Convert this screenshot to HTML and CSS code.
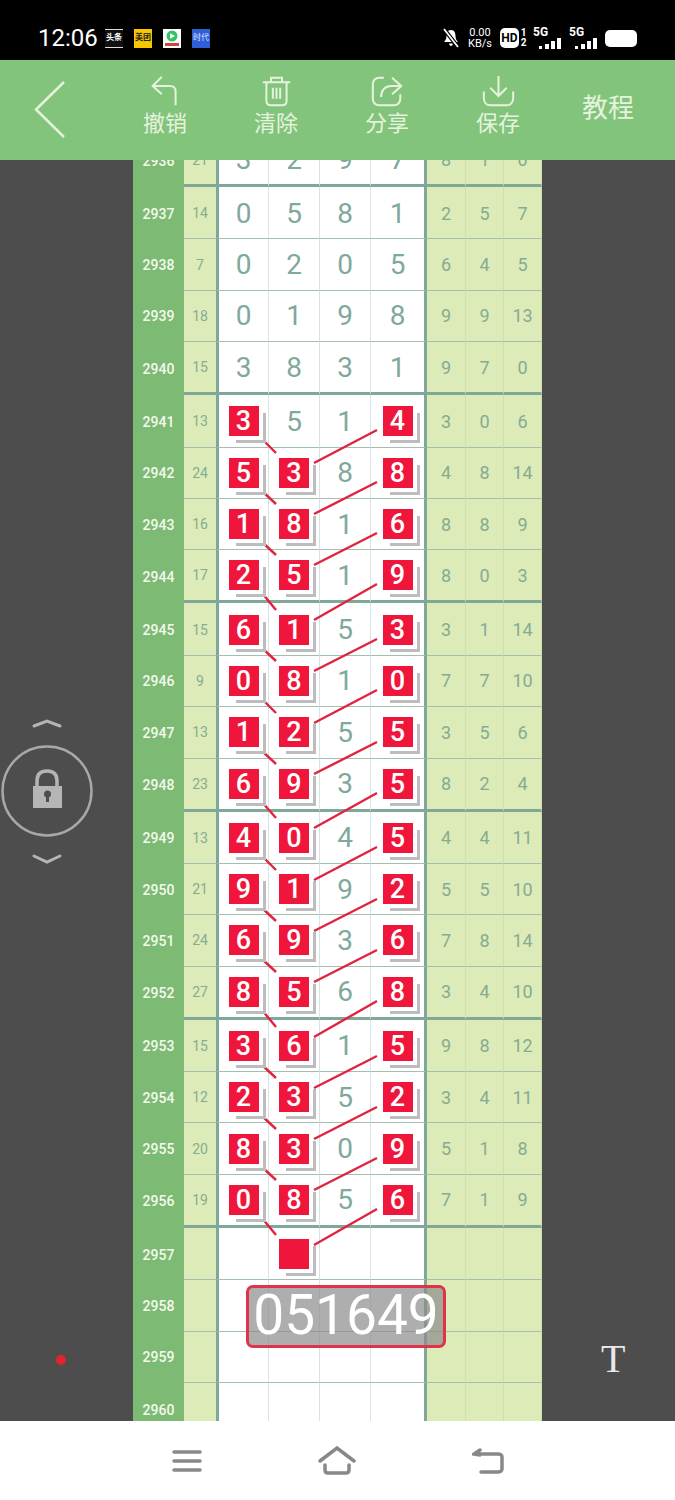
FILE: index.html
```html
<!DOCTYPE html>
<html lang="en">
<head>
  <meta charset="UTF-8">
  <title>Chart</title>
  <meta name="viewport" content="width=device-width, initial-scale=1.0">
  <link rel="stylesheet" href="styles.css">
</head>
<body>
  <div class="phone">
    <!-- Status bar -->
    <div class="statusbar">
      <span class="time">12:06</span>
      <span class="app app-toutiao">头条</span>
      <span class="app app-meituan">美团</span>
      <span class="app app-video">
        <svg viewBox="0 0 18 19" width="18" height="19"><rect width="18" height="19" fill="#fff"/><circle cx="9" cy="7" r="5.500" fill="#35c46a"/><path d="M7 4.300L12 7L7 9.700Z" fill="#fff"/><rect x="2" y="14" width="14" height="3" fill="#d8403a"/></svg>
      </span>
      <span class="app app-blue">时代</span>
      <span class="status-right">
        <svg class="bell" viewBox="0 0 18 20" width="18" height="20"><path d="M9 2C5.500 2 4.500 5 4.500 8C4.500 11 3.500 12.500 2 14H16C14.500 12.500 13.500 11 13.500 8C13.500 5 12.500 2 9 2ZM7 15.500C7.300 17 8 18 9 18C10 18 10.700 17 11 15.500Z" fill="#fff"/><path d="M2 1L16 19" stroke="#000" stroke-width="4"/><path d="M2 1L16 19" stroke="#fff" stroke-width="1.800"/></svg>
        <span class="speed"><span>0.00</span><span>KB/s</span></span>
        <span class="hd">HD</span>
        <span class="sim"><span>1</span><span>2</span></span>
        <span class="net">
          <span class="net-label">5G</span>
          <svg viewBox="0 0 24 12" width="24" height="12"><path d="M1 12V9H4V12ZM7 12V7H11V12ZM13 12V4H17V12ZM19 12V1H23V12Z" fill="#fff"/></svg>
        </span>
        <span class="net">
          <span class="net-label">5G</span>
          <svg viewBox="0 0 24 12" width="24" height="12"><path d="M1 12V9H4V12ZM7 12V7H11V12ZM13 12V4H17V12ZM19 12V1H23V12Z" fill="#fff"/></svg>
        </span>
        <span class="battery"></span>
      </span>
    </div>

    <!-- Toolbar -->
    <div class="toolbar">
      <svg class="back" viewBox="0 0 32 58" width="32" height="58"><path d="M30 1L2 28.500L30 56" fill="none" stroke="#e6f3dc" stroke-width="2.500"/></svg>
      <div class="tool tool-undo">
        <svg viewBox="0 0 36 36" width="36" height="36"><path d="M14 2L4 12L14 21M4 12H23C27 12 29 14.500 29 18V33" fill="none" stroke="#e6f3dc" stroke-width="2.200"/></svg>
        <span>撤销</span>
      </div>
      <div class="tool tool-clear">
        <svg viewBox="0 0 36 36" width="36" height="36"><path d="M3 8H33M12 8V3H24V8M7 8V28C7 31 9 33 12 33H24C27 33 29 31 29 28V8M14 14V26M18 14V26M22 14V26" fill="none" stroke="#e6f3dc" stroke-width="2.200"/></svg>
        <span>清除</span>
      </div>
      <div class="tool tool-share">
        <svg viewBox="0 0 36 36" width="36" height="36"><path d="M14 3H9C5 3 2 6 2 10V26C2 30 5 33 9 33H25C29 33 32 30 32 26V21M23 3L33 12L23 21M33 12H22C15 12 11 17 11 24" fill="none" stroke="#e6f3dc" stroke-width="2.200"/></svg>
        <span>分享</span>
      </div>
      <div class="tool tool-save">
        <svg viewBox="0 0 36 36" width="36" height="36"><path d="M18 1V23M9 14L18 23L27 14M2 18V25C2 30 5 33 9 33H27C31 33 34 30 34 25V18" fill="none" stroke="#e6f3dc" stroke-width="2.200"/></svg>
        <span>保存</span>
      </div>
      <span class="tutorial">教程</span>
    </div>

    <!-- Chart area -->
    <div class="main">
      <div class="board">
        <div class="sheet">
          <div class="group">
            <div class="row"><span class="no">2936</span><span class="sum">21</span><span class="d d1">3</span><span class="d">2</span><span class="d">9</span><span class="d d4">7</span><span class="r">8</span><span class="r">1</span><span class="r">0</span></div>
          </div>
          <div class="group">
            <div class="row"><span class="no">2937</span><span class="sum">14</span><span class="d d1">0</span><span class="d">5</span><span class="d">8</span><span class="d d4">1</span><span class="r">2</span><span class="r">5</span><span class="r">7</span></div>
            <div class="row"><span class="no">2938</span><span class="sum">7</span><span class="d d1">0</span><span class="d">2</span><span class="d">0</span><span class="d d4">5</span><span class="r">6</span><span class="r">4</span><span class="r">5</span></div>
            <div class="row"><span class="no">2939</span><span class="sum">18</span><span class="d d1">0</span><span class="d">1</span><span class="d">9</span><span class="d d4">8</span><span class="r">9</span><span class="r">9</span><span class="r">13</span></div>
            <div class="row"><span class="no">2940</span><span class="sum">15</span><span class="d d1">3</span><span class="d">8</span><span class="d">3</span><span class="d d4">1</span><span class="r">9</span><span class="r">7</span><span class="r">0</span></div>
          </div>
          <div class="group">
            <div class="row"><span class="no">2941</span><span class="sum">13</span><span class="d d1"><b class="hit">3</b></span><span class="d">5</span><span class="d">1</span><span class="d d4"><b class="hit">4</b></span><span class="r">3</span><span class="r">0</span><span class="r">6</span></div>
            <div class="row"><span class="no">2942</span><span class="sum">24</span><span class="d d1"><b class="hit">5</b></span><span class="d"><b class="hit">3</b></span><span class="d">8</span><span class="d d4"><b class="hit">8</b></span><span class="r">4</span><span class="r">8</span><span class="r">14</span></div>
            <div class="row"><span class="no">2943</span><span class="sum">16</span><span class="d d1"><b class="hit">1</b></span><span class="d"><b class="hit">8</b></span><span class="d">1</span><span class="d d4"><b class="hit">6</b></span><span class="r">8</span><span class="r">8</span><span class="r">9</span></div>
            <div class="row"><span class="no">2944</span><span class="sum">17</span><span class="d d1"><b class="hit">2</b></span><span class="d"><b class="hit">5</b></span><span class="d">1</span><span class="d d4"><b class="hit">9</b></span><span class="r">8</span><span class="r">0</span><span class="r">3</span></div>
          </div>
          <div class="group">
            <div class="row"><span class="no">2945</span><span class="sum">15</span><span class="d d1"><b class="hit">6</b></span><span class="d"><b class="hit">1</b></span><span class="d">5</span><span class="d d4"><b class="hit">3</b></span><span class="r">3</span><span class="r">1</span><span class="r">14</span></div>
            <div class="row"><span class="no">2946</span><span class="sum">9</span><span class="d d1"><b class="hit">0</b></span><span class="d"><b class="hit">8</b></span><span class="d">1</span><span class="d d4"><b class="hit">0</b></span><span class="r">7</span><span class="r">7</span><span class="r">10</span></div>
            <div class="row"><span class="no">2947</span><span class="sum">13</span><span class="d d1"><b class="hit">1</b></span><span class="d"><b class="hit">2</b></span><span class="d">5</span><span class="d d4"><b class="hit">5</b></span><span class="r">3</span><span class="r">5</span><span class="r">6</span></div>
            <div class="row"><span class="no">2948</span><span class="sum">23</span><span class="d d1"><b class="hit">6</b></span><span class="d"><b class="hit">9</b></span><span class="d">3</span><span class="d d4"><b class="hit">5</b></span><span class="r">8</span><span class="r">2</span><span class="r">4</span></div>
          </div>
          <div class="group">
            <div class="row"><span class="no">2949</span><span class="sum">13</span><span class="d d1"><b class="hit">4</b></span><span class="d"><b class="hit">0</b></span><span class="d">4</span><span class="d d4"><b class="hit">5</b></span><span class="r">4</span><span class="r">4</span><span class="r">11</span></div>
            <div class="row"><span class="no">2950</span><span class="sum">21</span><span class="d d1"><b class="hit">9</b></span><span class="d"><b class="hit">1</b></span><span class="d">9</span><span class="d d4"><b class="hit">2</b></span><span class="r">5</span><span class="r">5</span><span class="r">10</span></div>
            <div class="row"><span class="no">2951</span><span class="sum">24</span><span class="d d1"><b class="hit">6</b></span><span class="d"><b class="hit">9</b></span><span class="d">3</span><span class="d d4"><b class="hit">6</b></span><span class="r">7</span><span class="r">8</span><span class="r">14</span></div>
            <div class="row"><span class="no">2952</span><span class="sum">27</span><span class="d d1"><b class="hit">8</b></span><span class="d"><b class="hit">5</b></span><span class="d">6</span><span class="d d4"><b class="hit">8</b></span><span class="r">3</span><span class="r">4</span><span class="r">10</span></div>
          </div>
          <div class="group">
            <div class="row"><span class="no">2953</span><span class="sum">15</span><span class="d d1"><b class="hit">3</b></span><span class="d"><b class="hit">6</b></span><span class="d">1</span><span class="d d4"><b class="hit">5</b></span><span class="r">9</span><span class="r">8</span><span class="r">12</span></div>
            <div class="row"><span class="no">2954</span><span class="sum">12</span><span class="d d1"><b class="hit">2</b></span><span class="d"><b class="hit">3</b></span><span class="d">5</span><span class="d d4"><b class="hit">2</b></span><span class="r">3</span><span class="r">4</span><span class="r">11</span></div>
            <div class="row"><span class="no">2955</span><span class="sum">20</span><span class="d d1"><b class="hit">8</b></span><span class="d"><b class="hit">3</b></span><span class="d">0</span><span class="d d4"><b class="hit">9</b></span><span class="r">5</span><span class="r">1</span><span class="r">8</span></div>
            <div class="row"><span class="no">2956</span><span class="sum">19</span><span class="d d1"><b class="hit">0</b></span><span class="d"><b class="hit">8</b></span><span class="d">5</span><span class="d d4"><b class="hit">6</b></span><span class="r">7</span><span class="r">1</span><span class="r">9</span></div>
          </div>
          <div class="group group-open">
            <div class="row"><span class="no">2957</span><span class="sum"></span><span class="d d1"></span><span class="d"><b class="hit"></b></span><span class="d"></span><span class="d d4"></span><span class="r"></span><span class="r"></span><span class="r"></span></div>
            <div class="row"><span class="no">2958</span><span class="sum"></span><span class="d d1"></span><span class="d"></span><span class="d"></span><span class="d d4"></span><span class="r"></span><span class="r"></span><span class="r"></span></div>
            <div class="row"><span class="no">2959</span><span class="sum"></span><span class="d d1"></span><span class="d"></span><span class="d"></span><span class="d d4"></span><span class="r"></span><span class="r"></span><span class="r"></span></div>
            <div class="row"><span class="no">2960</span><span class="sum"></span><span class="d d1"></span><span class="d"></span><span class="d"></span><span class="d d4"></span><span class="r"></span><span class="r"></span><span class="r"></span></div>
          </div>
        </div>

        <!-- Links between the marked cells, in page coordinates -->
        <svg class="links" viewBox="133 160 409 1261" width="409" height="1261">
          <path d="M262 439L276 453M377 430L314 463M262 491L276 504M377 482L314 514M262 542L276 555M377 533L314 565M262 593L276 610M377 584L314 620M262 648L276 661M377 639L314 671M262 699L276 713M377 690L314 723M262 751L276 764M377 742L314 774M262 802L276 818M377 793L314 828M262 856L276 870M377 847L314 880M262 908L276 921M377 899L314 931M262 959L276 972M377 950L314 982M262 1010L276 1027M377 1001L314 1037M262 1065L276 1078M377 1056L314 1088M262 1116L276 1129M377 1107L314 1139M262 1167L276 1180M377 1158L314 1190M262 1218L276 1235M377 1209L314 1245" fill="none" stroke="#e0233f" stroke-width="2.400"/>
        </svg>

        <div class="result">051649</div>
      </div>

      <!-- Lock control -->
      <svg class="lock" viewBox="0 0 94 150" width="94" height="150">
        <path d="M34 7L47 2L60 7" fill="none" stroke="#b5b5b5" stroke-width="3" stroke-linecap="round"/>
        <circle cx="47" cy="72" r="44.500" fill="none" stroke="#a8a8a8" stroke-width="2.500"/>
        <path d="M37 68V62C37 55 41 52 47 52C53 52 57 55 57 62V68" fill="none" stroke="#b5b5b5" stroke-width="3.500"/>
        <rect x="33" y="67" width="29" height="22" fill="#b5b5b5"/>
        <circle cx="47.500" cy="75" r="3.500" fill="#4d4d4d"/>
        <rect x="46" y="76" width="3" height="7" fill="#4d4d4d"/>
        <path d="M34 137L47 143L60 137" fill="none" stroke="#b5b5b5" stroke-width="3" stroke-linecap="round"/>
      </svg>
      <span class="dot"></span>
      <span class="text-tool">T</span>
    </div>

    <!-- Navigation bar -->
    <div class="navbar">
      <svg viewBox="0 0 30 24" width="30" height="24"><path d="M2 3H28M2 12H28M2 21H28" fill="none" stroke="#888" stroke-width="3.500" stroke-linecap="round"/></svg>
      <svg viewBox="0 0 38 30" width="38" height="30"><path d="M2 15L19 2L36 15M7 19V24C7 26 8 27 10 27H28C30 27 31 26 31 24V19" fill="none" stroke="#888" stroke-width="3.500" stroke-linecap="round"/></svg>
      <svg viewBox="0 0 32 28" width="32" height="28"><path d="M3 7H26C28 7 30 8 30 10V22C30 24 28 25 26 25H9M8 3L2 7L8 8" fill="none" stroke="#888" stroke-width="3.500" stroke-linecap="round"/></svg>
    </div>
  </div>
</body>
</html>
```

FILE: styles.css
```css
html, body {
  margin: 0;
  padding: 0;
  background: #4d4d4d;
}
.phone {
  display: flex;
  flex-direction: column;
  width: 675px;
  height: 1500px;
  overflow: hidden;
  font-family: Roboto, "Noto Sans CJK SC", sans-serif;
}

/* Status bar */
.statusbar {
  display: flex;
  align-items: center;
  height: 60px;
  padding: 16px 38px 0;
  box-sizing: border-box;
  background: #000;
  color: #fff;
  flex: none;
}
.time {
  flex: none;
  width: 67px;
  font-size: 24px;
  white-space: nowrap;
}
.app {
  display: flex;
  align-items: center;
  justify-content: center;
  flex: none;
  width: 18px;
  height: 19px;
  margin-right: 11px;
  font-size: 8px;
  line-height: 8px;
  overflow: hidden;
}
.app-toutiao {
  background: #111;
  border-top: 1px solid #ddd;
  border-bottom: 1px solid #ddd;
  box-sizing: border-box;
  font-weight: bold;
}
.app-meituan {
  background: #f7c600;
  color: #222;
  font-weight: bold;
}
.app-blue {
  background: #2f5fd8;
  color: #dfe8ff;
}
.status-right {
  display: flex;
  align-items: center;
  margin-left: auto;
}
.bell {
  margin-right: 7px;
}
.speed {
  display: flex;
  flex-direction: column;
  align-items: center;
  width: 26px;
  margin-right: 7px;
  font-size: 11px;
  line-height: 11px;
}
.hd {
  width: 19px;
  height: 20px;
  background: #fff;
  color: #000;
  border-radius: 5px;
  font-size: 12px;
  font-weight: bold;
  line-height: 20px;
  text-align: center;
}
.sim {
  display: flex;
  flex-direction: column;
  align-items: center;
  width: 9px;
  margin-right: 5px;
  font-size: 10px;
  font-weight: bold;
  line-height: 10px;
}
.net {
  position: relative;
  width: 29px;
  height: 22px;
  margin-right: 7px;
}
.net svg {
  position: absolute;
  right: 0;
  bottom: 0;
}
.net-label {
  position: absolute;
  left: 0;
  top: -2px;
  font-size: 12px;
  font-weight: bold;
}
.battery {
  width: 32px;
  height: 17px;
  background: #fff;
  border-radius: 5px;
}

/* Toolbar */
.toolbar {
  display: flex;
  align-items: center;
  height: 100px;
  flex: none;
  background: #82c47c;
  color: #e6f3dc;
}
.back {
  margin-left: 34px;
  margin-top: -1px;
  flex: none;
}
.tool {
  display: flex;
  flex-direction: column;
  align-items: center;
  align-self: flex-start;
  width: 60px;
  padding-top: 15px;
  font-size: 22px;
  line-height: 26px;
}
.tool svg {
  display: block;
  width: 33px;
  height: 33px;
  margin-bottom: 3px;
}
.tool-undo {
  margin-left: 69px;
}
.tool-clear,
.tool-share,
.tool-save {
  margin-left: 51px;
}
.tutorial {
  margin-left: 54px;
  margin-top: -9px;
  font-size: 26px;
}

/* Chart */
.main {
  position: relative;
  flex: 1;
  min-height: 0;
  display: flex;
  justify-content: center;
  background: #4d4d4d;
}
.board {
  position: relative;
  width: 409px;
  height: 100%;
  overflow: hidden;
}
.sheet {
  margin-top: -26px;
}
.row {
  display: grid;
  grid-template-columns: 51px 32px 53px 51px 51px 56px 39px 38px 38px;
  height: 51.4px;
}
.group .row:first-child {
  height: 52.4px;
}
.group .row:first-child > span {
  padding-top: 1px;
}
.group .row:last-child {
  height: 53px;
}
.row > span {
  display: flex;
  align-items: center;
  justify-content: center;
  box-sizing: border-box;
  border-bottom: 1px solid #a3bfb2;
}
.group .row:last-child > span {
  border-bottom: 3px solid #7fa898;
}
.group-open .row:last-child > span {
  border-bottom: 1px solid #a3bfb2;
}
.row > .no,
.group .row:last-child > .no {
  border-bottom: 0;
  background: #7dbb74;
  color: #f4f9ee;
  font-size: 14px;
  font-weight: 500;
}
.sum {
  background: #dcebb8;
  color: #86ab92;
  font-size: 14px;
}
.d {
  background: #fff;
  border-right: 1px solid #d7e4e2;
  color: #7fa99c;
  font-size: 28px;
}
.d1 {
  border-left: 3px solid #7fa898;
}
.row > .d4 {
  border-right: 3px solid #7fa898;
}
.r {
  background: #dcebb8;
  border-right: 1px solid #cfe0ad;
  color: #86ab92;
  font-size: 18px;
}
.hit {
  position: relative;
  z-index: 2;
  width: 30px;
  height: 30px;
  background: #f0153a;
  color: #fff;
  font-size: 27px;
  font-weight: 500;
  line-height: 30px;
  text-align: center;
  box-shadow: 4px 4px 0 #fff, 7px 7px 0 #bdbdbd;
}
.links {
  position: absolute;
  top: 0;
  left: 0;
  z-index: 1;
  pointer-events: none;
}
.result {
  position: absolute;
  left: 113px;
  top: 1125px;
  z-index: 3;
  width: 200px;
  height: 63px;
  box-sizing: border-box;
  border: 3px solid #e0334a;
  border-radius: 7px;
  background: rgba(140, 140, 140, 0.7);
  color: #fff;
  font-size: 55px;
  line-height: 54px;
  text-align: center;
}

/* Controls on the grey margins */
.lock {
  position: absolute;
  left: 0;
  top: 559px;
}
.dot {
  position: absolute;
  left: 56px;
  top: 1195px;
  width: 10px;
  height: 10px;
  border-radius: 50%;
  background: #e8212e;
}
.text-tool {
  position: absolute;
  left: 601px;
  top: 1176px;
  color: #e8e8e8;
  font-family: "Liberation Serif", serif;
  font-size: 40px;
  line-height: 46px;
}

/* Navigation bar */
.navbar {
  display: flex;
  align-items: center;
  justify-content: space-between;
  height: 79px;
  flex: none;
  padding: 0 171px 0 172px;
  box-sizing: border-box;
  background: #fff;
}
```
